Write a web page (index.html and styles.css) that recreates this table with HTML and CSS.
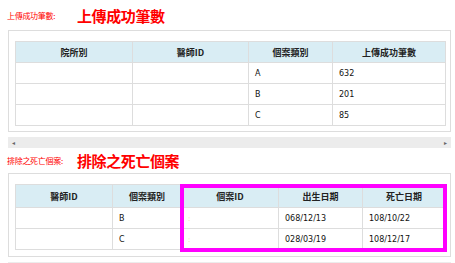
FILE: index.html
```html
<!DOCTYPE html>
<html lang="zh-Hant">
<head>
<meta charset="utf-8">
<title>上傳成功筆數</title>
<link rel="stylesheet" href="styles.css">
</head>
<body>
  <div class="section-title">
    <span class="label-small">上傳成功筆數:</span>
    <span class="label-big">上傳成功筆數</span>
  </div>
  <div class="panel">
    <table class="grid grid-upload">
      <colgroup>
        <col style="width:117px"><col style="width:116px"><col style="width:84px"><col>
      </colgroup>
      <thead>
        <tr><th>院所別</th><th>醫師ID</th><th>個案類別</th><th>上傳成功筆數</th></tr>
      </thead>
      <tbody>
        <tr><td></td><td></td><td>A</td><td>632</td></tr>
        <tr><td></td><td></td><td>B</td><td>201</td></tr>
        <tr><td></td><td></td><td>C</td><td>85</td></tr>
      </tbody>
    </table>
  </div>
  <div class="hscroll"><span class="arrow">◂</span><span class="arrow">▸</span></div>

  <div class="section-title second">
    <span class="label-small">排除之死亡個案:</span>
    <span class="label-big">排除之死亡個案</span>
  </div>
  <div class="panel panel-death">
    <table class="grid grid-death">
      <colgroup>
        <col style="width:97px"><col style="width:69px"><col style="width:97px"><col style="width:84px"><col>
      </colgroup>
      <thead>
        <tr><th>醫師ID</th><th>個案類別</th><th>個案ID</th><th>出生日期</th><th>死亡日期</th></tr>
      </thead>
      <tbody>
        <tr><td></td><td>B</td><td><span class="dot">:</span></td><td>068/12/13</td><td>108/10/22</td></tr>
        <tr><td></td><td>C</td><td><span class="dot">:</span></td><td>028/03/19</td><td>108/12/17</td></tr>
      </tbody>
    </table>
    <div class="highlight"></div>
  </div>
  <div class="hscroll"></div>
</body>
</html>
```

FILE: styles.css
```css
html, body {
  margin: 0;
  padding: 0;
  background: #fff;
}

body {
  font-family: "DejaVu Sans", Verdana, sans-serif;
  font-size: 8px;
  color: #111;
}

.section-title {
  display: flex;
  align-items: center;
  height: 30px;
  padding-left: 7px;
  color: #f00;
}

.section-title.second {
  height: 25px;
  margin-top: 0;
}

.label-small {
  font-family: "Noto Sans CJK TC", sans-serif;
  font-size: 8px;
  width: 70px;
  letter-spacing: -0.3px;
}

.label-big {
  font-family: "Noto Sans CJK TC", sans-serif;
  font-size: 15px;
  font-weight: 700;
  letter-spacing: -0.4px;
}

.panel {
  position: relative;
  margin: 0 4px 0 8px;
  border: 1px solid #ddd;
  padding: 10px 5px 5px 6px;
}

.grid {
  width: 431px;
  border-collapse: collapse;
  table-layout: fixed;
}

.grid th,
.grid td {
  border: 1px solid #ddd;
  padding: 0 6px;
  height: 20px;
  text-align: left;
  white-space: nowrap;
}

.grid th {
  background: #d9edf4;
  text-align: center;
  font-family: "Noto Sans CJK TC", sans-serif;
  font-size: 9px;
  font-weight: 700;
  color: #222;
}

.grid-upload th { height: 20px; }

.grid-death th { height: 22px; }

.grid-death td { height: 20px; }

.panel-death {
  padding-bottom: 6px;
}

.dot {
  color: #f3d98a;
  font-size: 7px;
}

.highlight {
  position: absolute;
  left: 171px;
  top: 10px;
  width: 259px;
  height: 60px;
  border: 4px solid #ff00ff;
}

.hscroll {
  display: flex;
  justify-content: space-between;
  align-items: center;
  margin: 5px 4px 0 8px;
  height: 11px;
  padding: 0 4px;
  background: #ececec;
  color: #666;
  font-size: 6px;
}
```
